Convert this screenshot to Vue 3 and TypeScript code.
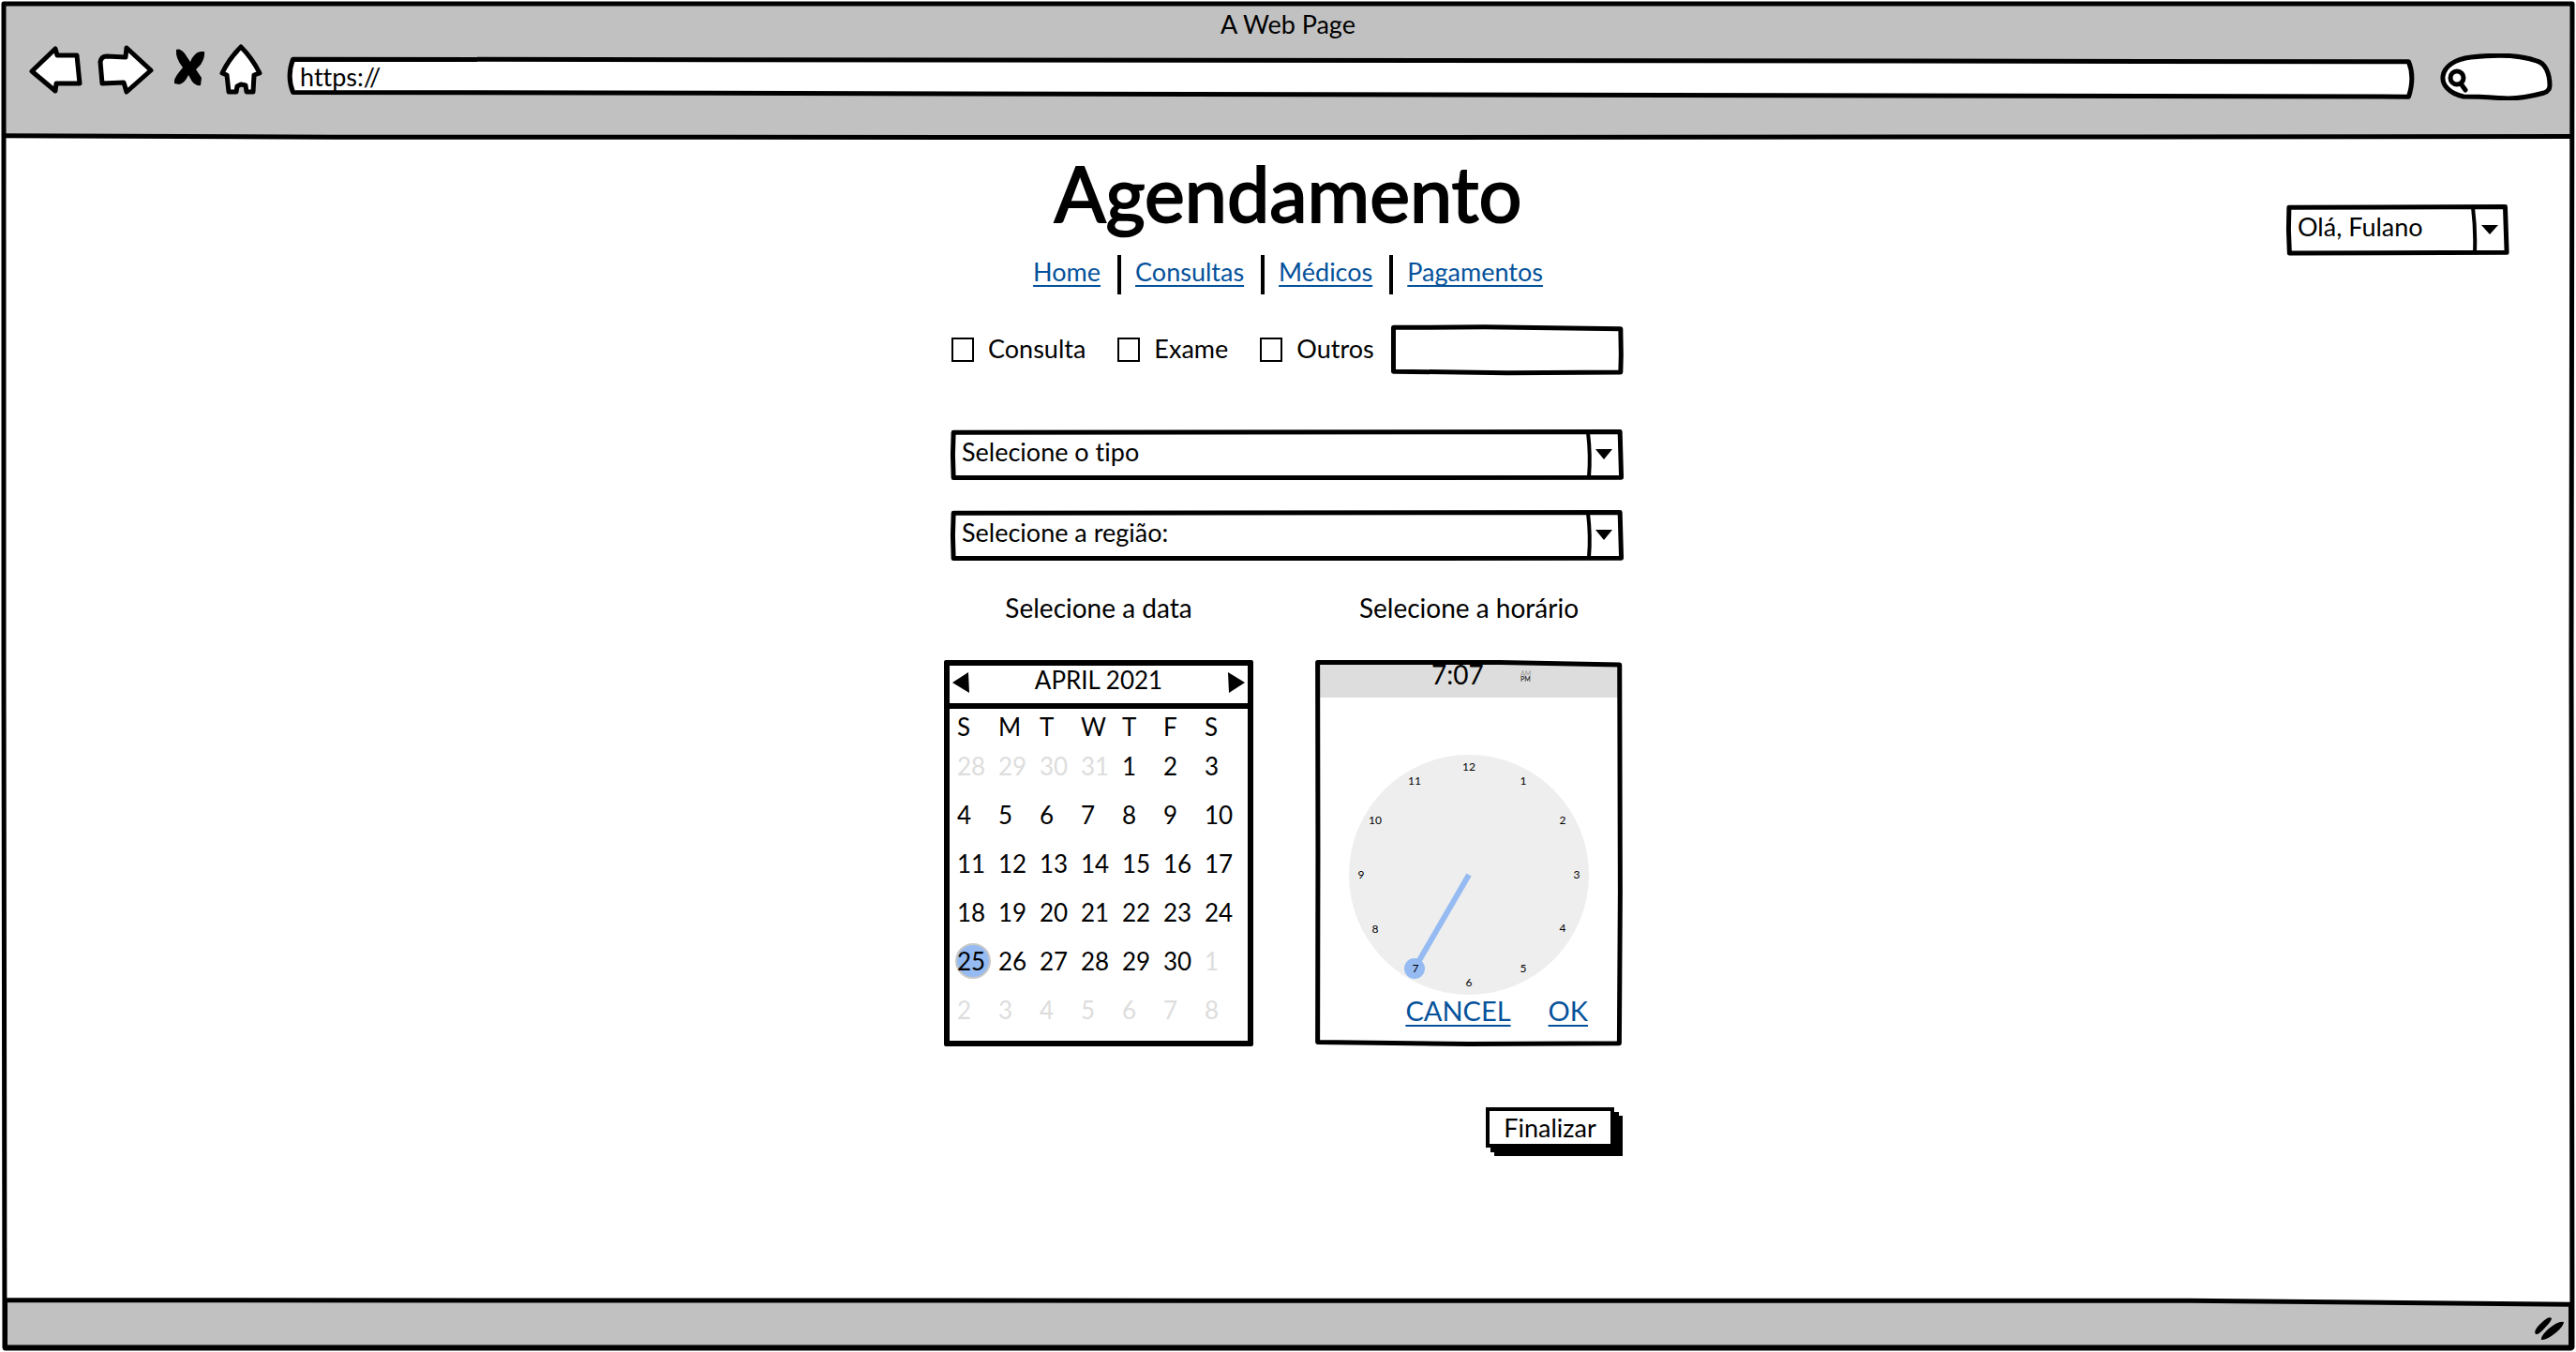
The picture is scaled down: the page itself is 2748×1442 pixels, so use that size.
<script setup lang="ts">
import { ref } from 'vue'

interface Day {
  label: number
  muted?: boolean
  selected?: boolean
}

const url = ref('https://')
const search = ref('')
const other = ref('')

const links: string[] = ['Home', 'Consultas', 'Médicos', 'Pagamentos']
const kinds: string[] = ['Consulta', 'Exame', 'Outros']
const selects = [
  { id: 'tipo', label: 'Selecione o tipo' },
  { id: 'regiao', label: 'Selecione a região:' },
]

const weekdays: string[] = ['S', 'M', 'T', 'W', 'T', 'F', 'S']

// Six weeks starting on Sunday, March 28
const weeks: Day[][] = Array.from({ length: 6 }, (_, w) =>
  Array.from({ length: 7 }, (_, d) => {
    const n = w * 7 + d - 3
    if (n < 1) return { label: n + 31, muted: true }
    if (n > 30) return { label: n - 30, muted: true }
    return { label: n, selected: n === 25 }
  }),
)

const hours = Array.from({ length: 12 }, (_, i) => {
  const angle = ((i + 1) * Math.PI) / 6
  return {
    label: i + 1,
    x: Math.round(128 + 115 * Math.sin(angle)),
    y: Math.round(128 - 115 * Math.cos(angle)) + 4,
  }
})
</script>

<template>
  <div class="window">
    <header class="chrome">
      <p class="caption">A Web Page</p>
      <div class="toolbar">
        <div class="controls">
          <button type="button" aria-label="Back">
            <svg width="58" height="54" viewBox="0 0 58 54">
              <path class="outline" d="M3 29 L28 5 L30 12 L51 12 L54 42 L29 42 L28 50 Z" />
            </svg>
          </button>
          <button type="button" aria-label="Forward">
            <svg width="60" height="56" viewBox="0 0 60 56">
              <path class="outline" d="M3 20 Q4 14 10 14 L30 15 L31 5 L57 29 L31 52 L28 42 L5 43 Z" />
            </svg>
          </button>
          <button type="button" aria-label="Stop">
            <svg width="34" height="54" viewBox="0 0 34 54">
              <path d="M3 6 Q7 4 12 10 L18 19 Q22 9 29 8 L33 8 Q34 14 29 22 L24 27 L30 36 L29 44 Q24 45 20 40 L16 33 Q12 42 6 43 L1 42 Q0 37 6 30 L10 25 Q2 15 3 6 Z" />
            </svg>
          </button>
          <button type="button" aria-label="Home">
            <svg width="46" height="54" viewBox="0 0 46 54">
              <path class="outline" d="M23 3 Q35 15 43 31 L37 33 L36 51 L29 51 L28 44 L23 43 L19 45 L18 51 L10 51 L8 33 L3 31 Q10 16 23 3 Z" />
            </svg>
          </button>
        </div>
        <div class="address">
          <svg class="sketch" viewBox="0 0 1000 100" preserveAspectRatio="none" aria-hidden="true">
            <path class="fill" d="M2 5 Q-1 48 2 87 L998 98 Q1001 50 998 11 Z" />
          </svg>
          <input v-model="url" type="text" aria-label="Address" />
        </div>
        <div class="search">
          <svg width="120" height="50" viewBox="0 0 120 50" aria-hidden="true">
            <path class="outline" d="M25 46 C-7 39 -4 8 33 4 C60 1 87 2 103 8 C112 10 117 21 117 34 Q117 40 111 42 C96 46 86 48 73 48 C55 47 43 46 25 46 Z" />
            <circle class="outline" cx="18" cy="26" r="7" />
            <path class="outline" d="M22 32 L27 39" />
          </svg>
          <input v-model="search" type="search" aria-label="Search" />
        </div>
      </div>
      <svg class="sketch" viewBox="0 0 1000 1000" preserveAspectRatio="none" aria-hidden="true">
        <path d="M2 978 L130 988 L560 990 L998 983" />
      </svg>
    </header>

    <main class="page">
      <div class="column">
        <h1>Agendamento</h1>
        <nav>
          <a v-for="link in links" :key="link" href="#">{{ link }}</a>
        </nav>

        <form @submit.prevent>
          <div class="kinds">
            <label v-for="kind in kinds" :key="kind">
              <input type="checkbox" /><span>{{ kind }}</span>
            </label>
            <div class="other">
              <svg class="sketch" viewBox="0 0 1000 1000" preserveAspectRatio="none" aria-hidden="true">
                <path d="M10 45 L400 35 L990 70 L992 600 L990 960 L500 975 L10 945 Z" />
              </svg>
              <input v-model="other" type="text" aria-label="Outros" />
            </div>
          </div>

          <div v-for="s in selects" :key="s.id" class="dropdown">
            <svg class="sketch" viewBox="0 0 1000 1000" preserveAspectRatio="none" aria-hidden="true">
              <path d="M3 60 L996 45 L998 950 L3 955 L2 500 Z" />
            </svg>
            <select :id="s.id" :aria-label="s.label">
              <option>{{ s.label }}</option>
            </select>
            <svg class="caret" viewBox="0 0 40 54" aria-hidden="true">
              <path class="rule" d="M3 3 Q6 28 4 51" />
              <path d="M11 21 L29 21 L20 32 Z" />
            </svg>
          </div>

          <div class="pickers">
            <section class="date">
              <h2>Selecione a data</h2>
              <div class="calendar">
                <div class="month">
                  <button type="button" aria-label="Previous month">
                    <svg width="18" height="22" viewBox="0 0 18 22"><path d="M0 11 L17 0 L18 22 Z" /></svg>
                  </button>
                  <span>APRIL 2021</span>
                  <button type="button" aria-label="Next month">
                    <svg width="18" height="22" viewBox="0 0 18 22"><path d="M18 11 L1 22 L0 0 Z" /></svg>
                  </button>
                </div>
                <table>
                  <thead>
                    <tr>
                      <th v-for="(d, i) in weekdays" :key="i" scope="col">{{ d }}</th>
                    </tr>
                  </thead>
                  <tbody>
                    <tr v-for="(week, w) in weeks" :key="w">
                      <td v-for="(day, i) in week" :key="i" :class="{ muted: day.muted, selected: day.selected }">
                        <span>{{ day.label }}</span>
                      </td>
                    </tr>
                  </tbody>
                </table>
              </div>
            </section>

            <section class="time">
              <h2>Selecione a horário</h2>
              <div class="clock">
                <svg class="sketch" viewBox="0 0 1000 1000" preserveAspectRatio="none" aria-hidden="true">
                  <path d="M8 6 L600 6 L990 12 L992 600 L989 992 L500 994 L8 989 L9 500 Z" />
                </svg>
                <div class="readout">
                  <span class="now">7:07</span>
                  <span class="period"><span class="off">AM</span><span>PM</span></span>
                </div>
                <svg class="face" viewBox="0 0 256 256" role="img" aria-label="7:07 PM">
                  <circle class="dial" cx="128" cy="128" r="128" />
                  <path class="hand" d="M128 128 L70 228" />
                  <circle class="knob" cx="70" cy="228" r="11" />
                  <text v-for="h in hours" :key="h.label" :x="h.x" :y="h.y">{{ h.label }}</text>
                </svg>
                <div class="actions">
                  <a href="#">CANCEL</a>
                  <a href="#">OK</a>
                </div>
              </div>
            </section>
          </div>

          <button class="submit" type="submit">Finalizar</button>
        </form>
      </div>

      <div class="dropdown user">
        <svg class="sketch" viewBox="0 0 1000 1000" preserveAspectRatio="none" aria-hidden="true">
          <path d="M8 60 L985 45 L992 950 L10 965 L6 500 Z" />
        </svg>
        <select id="user" aria-label="Usuário">
          <option>Olá, Fulano</option>
        </select>
        <svg class="caret" viewBox="0 0 40 54" aria-hidden="true">
          <path class="rule" d="M2 3 Q5 28 4 51" />
          <path d="M11 22 L29 22 L20 32 Z" />
        </svg>
      </div>
    </main>

    <footer>
      <svg class="sketch" viewBox="0 0 1000 100" preserveAspectRatio="none" aria-hidden="true">
        <path class="bar" d="M2 3 L600 4 L850 4 L998 11 L998 93 L2 93 Z" />
      </svg>
      <svg class="grip" width="32" height="28" viewBox="0 0 32 28" aria-hidden="true">
        <path d="M1 19 Q-2 15 7 7 Q15 -1 18 2 Q18 5 11 12 Q4 20 1 19 Z M7 25 Q6 21 15 13 Q26 4 31 6 Q31 10 23 17 Q12 26 7 25 Z" />
      </svg>
    </footer>

    <svg class="sketch" viewBox="0 0 2748 1442" preserveAspectRatio="none" aria-hidden="true">
      <path d="M4 4 L2744 4 L2743 700 L2744 1437 L5 1437 L4 700 Z" />
    </svg>
  </div>
</template>

<style>
body {
  margin: 0;
}
</style>

<style scoped>
.window {
  position: relative;
  display: flex;
  flex-direction: column;
  min-height: 100vh;
  box-sizing: border-box;
  background: #fff;
  color: #000;
  font-family: Lato, "Open Sans", sans-serif;
  font-size: 27px;
  font-variant-ligatures: none;
  line-height: 32px;
}

.sketch {
  position: absolute;
  inset: 0;
  width: 100%;
  height: 100%;
  overflow: visible;
  pointer-events: none;
}

.sketch path {
  fill: none;
  stroke: #000;
  stroke-width: 5px;
  stroke-linejoin: round;
  vector-effect: non-scaling-stroke;
}

.sketch path.fill {
  fill: #fff;
}

.sketch path.bar {
  fill: #c1c1c1;
}

.outline {
  fill: #fff;
  stroke: #000;
  stroke-width: 5px;
  stroke-linejoin: round;
  stroke-linecap: round;
}

button,
input,
select {
  margin: 0;
  padding: 0;
  border: 0;
  background: none;
  color: inherit;
  font: inherit;
  outline: none;
}

button svg {
  display: block;
}

.chrome {
  position: relative;
  height: 148px;
  box-sizing: border-box;
  padding-top: 10px;
  background: linear-gradient(#c1c1c1, #c1c1c1) 4px 4px / calc(100% - 8px) 141px no-repeat;
}

.caption {
  margin: 0;
  text-align: center;
}

.toolbar {
  display: flex;
  align-items: flex-start;
  margin-top: 4px;
  padding: 0 25px 0 31px;
}

.controls {
  display: flex;
  width: 277px;
  gap: 15px;
}

.controls button:nth-child(3) {
  margin-left: 6px;
}

.address {
  position: relative;
  flex: 1;
  height: 43px;
  margin-top: 15px;
}

.address input {
  position: relative;
  box-sizing: border-box;
  width: 100%;
  height: 40px;
  padding: 0 12px;
}

.search {
  position: relative;
  width: 120px;
  height: 50px;
  margin: 11px 0 0 29px;
}

.search svg {
  display: block;
}

.search input {
  position: absolute;
  inset: 8px 12px 8px 34px;
  width: 74px;
}

.page {
  flex: 1;
  display: grid;
  grid-template-columns: 1fr 734px 1fr;
  align-items: start;
  padding: 10px 0 48px;
}

.column {
  grid-column: 2;
}

h1,
h2 {
  margin: 0;
  font-weight: 400;
  text-align: center;
}

h1 {
  font-size: 81px;
  line-height: 96px;
  -webkit-text-stroke: 2px #000;
}

h2 {
  font-size: 28px;
  line-height: 32px;
}

nav {
  display: flex;
  justify-content: center;
  margin-top: 18px;
  line-height: 36px;
}

nav a {
  height: 42px;
}

nav a + a {
  margin-left: 18px;
  padding-left: 19px;
  background: linear-gradient(#000, #000) 0 0 / 4px 100% no-repeat;
}

a {
  color: #05529b;
  text-decoration-line: underline;
  text-decoration-thickness: 2px;
  text-underline-offset: 4px;
  text-decoration-skip-ink: none;
}

form {
  display: flex;
  flex-direction: column;
  padding: 0 10px 0 8px;
}

.kinds {
  display: flex;
  align-items: center;
  margin-top: 33px;
}

.kinds label {
  display: flex;
  align-items: center;
  margin-right: 34px;
}

.kinds label:nth-child(3) {
  margin-right: 18px;
}

.kinds label span {
  padding-bottom: 3px;
}

.kinds input[type="checkbox"] {
  appearance: none;
  width: 24px;
  height: 26px;
  margin-right: 15px;
  border: 2px solid #000;
}

.other {
  position: relative;
  flex: 1;
  height: 52px;
}

.other input {
  position: relative;
  box-sizing: border-box;
  width: 100%;
  height: 100%;
  padding: 0 12px;
}

.dropdown {
  position: relative;
  height: 54px;
  margin-top: 32px;
}

.kinds + .dropdown {
  margin-top: 59px;
}

.dropdown select {
  position: relative;
  display: block;
  appearance: none;
  box-sizing: border-box;
  width: 100%;
  height: 100%;
  padding: 0 44px 6px 11px;
}

.caret {
  position: absolute;
  top: 0;
  right: 0;
  width: 40px;
  height: 54px;
  pointer-events: none;
}

.rule {
  fill: none;
  stroke: #000;
  stroke-width: 4px;
}

.user {
  grid-column: 3;
  justify-self: end;
  width: 236px;
  margin: 60px 72px 0 0;
}

.pickers {
  display: flex;
  justify-content: space-between;
  margin: 34px 0 0 -8px;
}

.calendar,
.clock {
  box-sizing: border-box;
  height: 412px;
  margin-top: 40px;
}

.calendar {
  width: 330px;
  border: 6px solid #000;
  border-radius: 2px;
  font-size: 26px;
}

.month {
  display: flex;
  justify-content: space-between;
  height: 40px;
  padding: 0 3px;
  border-bottom: 6px solid #000;
  line-height: 30px;
}

.month button {
  align-self: flex-start;
  margin-top: 7px;
}

table {
  width: 308px;
  border-collapse: collapse;
  table-layout: fixed;
}

th,
td {
  height: 42px;
  box-sizing: border-box;
  padding: 3px 0 0 8px;
  font-weight: 400;
  text-align: left;
  vertical-align: top;
}

td {
  height: 52px;
}

.muted {
  color: #ddd;
}

.selected span {
  position: relative;
  z-index: 0;
}

.selected span::before {
  content: "";
  position: absolute;
  z-index: -1;
  top: -3px;
  left: -2px;
  width: 34px;
  height: 34px;
  border: 2px solid #c8c8c8;
  border-radius: 50%;
  background: #95bbf2;
}

.clock {
  position: relative;
  width: 328px;
  padding: 5px;
}

.readout {
  display: flex;
  height: 35px;
  padding-left: 119px;
  background: #ddd;
}

.now {
  width: 95px;
  font-size: 28px;
  line-height: 20px;
}

.period {
  display: flex;
  flex-direction: column;
  padding-top: 6px;
  font-size: 7px;
  line-height: 6px;
}

.off {
  color: #999;
}

.face {
  display: block;
  width: 256px;
  height: 256px;
  margin: 61px auto 0;
}

.dial {
  fill: #eee;
}

.hand {
  stroke: #95bbf2;
  stroke-width: 6px;
}

.knob {
  fill: #95bbf2;
}

.face text {
  font-size: 12px;
  text-anchor: middle;
}

.actions {
  display: flex;
  justify-content: flex-end;
  gap: 40px;
  padding-right: 32px;
  font-size: 29px;
  line-height: 34px;
}

.submit {
  align-self: flex-end;
  box-sizing: border-box;
  width: 137px;
  height: 43px;
  margin: 65px 9px 0 0;
  border: 4px solid #000;
  background: #fff;
  box-shadow: 5px 5px 0 #000, 9px 9px 0 #000;
  line-height: 30px;
}

footer {
  position: relative;
  display: flex;
  justify-content: flex-end;
  height: 57px;
  box-sizing: border-box;
  padding: 19px 12px 0 0;
}

.grip {
  position: relative;
}
</style>
